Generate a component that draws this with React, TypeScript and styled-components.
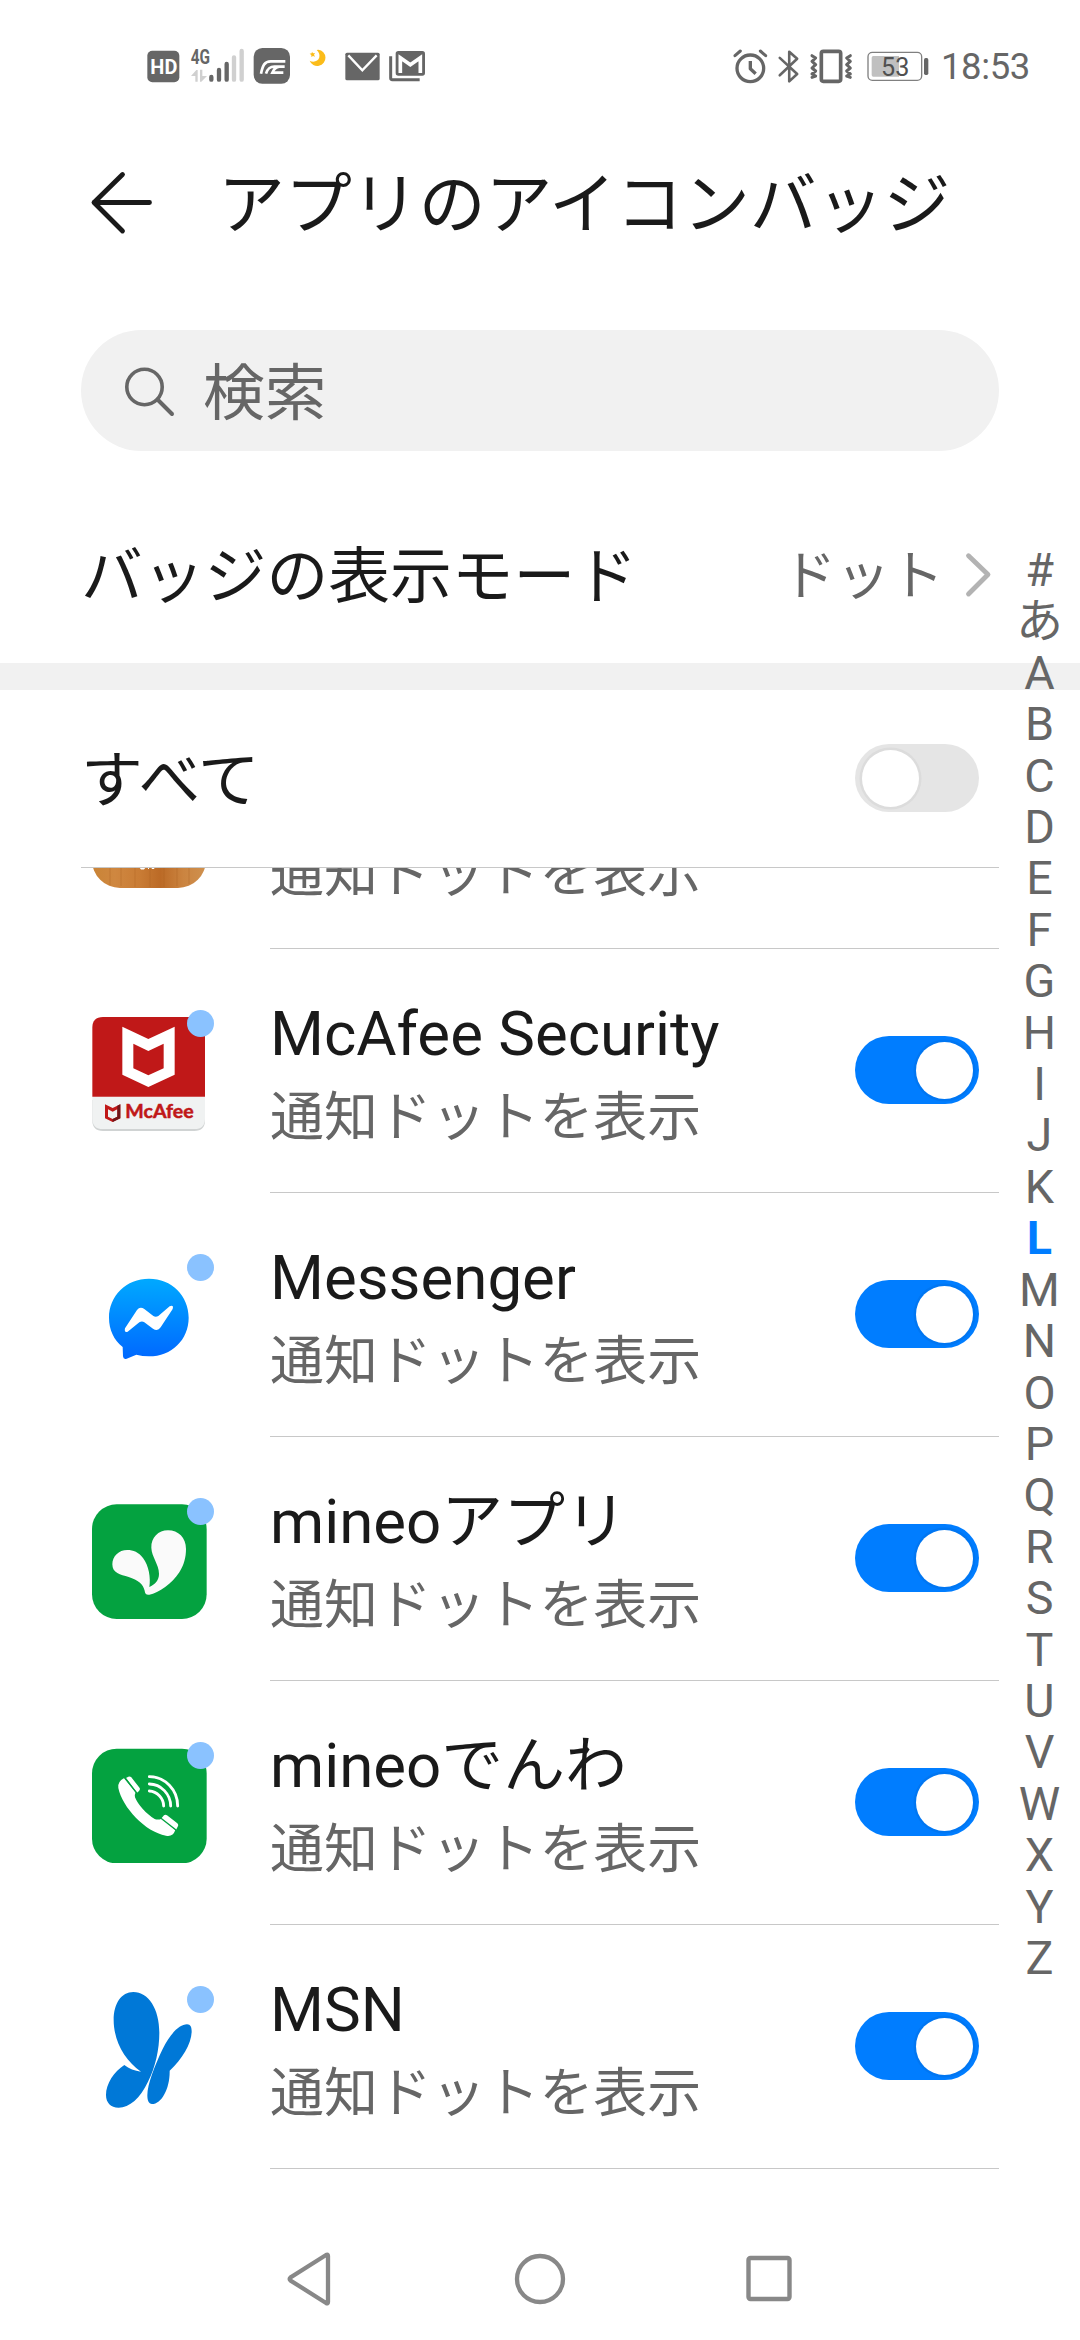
import React, { useState } from "react";
import styled, { createGlobalStyle } from "styled-components";

const GlobalStyle = createGlobalStyle`
  html, body { margin: 0; padding: 0; background: #fff; }
  * { box-sizing: border-box; }
`;

const Screen = styled.main`
  position: relative;
  display: flex;
  flex-direction: column;
  width: 1080px;
  height: 2340px;
  overflow: hidden;
  background: #fff;
  color: #1a1a1a;
  font-family: Roboto, "Noto Sans CJK JP", sans-serif;
`;

const StatusBar = styled.header`
  display: flex;
  justify-content: space-between;
  height: 134px;
  padding: 47px 51px 0 147px;
`;

const StatusGroup = styled.div`
  display: flex;
  align-items: flex-start;
  height: 40px;
`;

const StatusGlyph = styled.svg<{ $gap?: number }>`
  display: block;
  height: 40px;
  margin-left: ${(p) => p.$gap ?? 0}px;
  overflow: visible;
`;

const Clock = styled.time`
  margin-left: 11px;
  width: 88px;
  font-size: 36.5px;
  line-height: 40px;
  letter-spacing: -0.4px;
  color: #666;
  white-space: nowrap;
`;

const TitleBar = styled.div`
  display: flex;
  align-items: center;
  height: 136px;
  padding-left: 88px;
`;

const BackButton = styled.button`
  display: flex;
  padding: 0;
  border: 0;
  background: none;
`;

const Title = styled.h1`
  margin: 0 0 0 62px;
  padding-top: 6px;
  font-size: 66.9px;
  font-weight: 400;
  line-height: 90px;
  white-space: nowrap;
`;

const SearchField = styled.div`
  display: flex;
  align-items: center;
  flex: none;
  width: 918px;
  height: 121px;
  margin: 60px 0 0 81px;
  padding-left: 42px;
  border-radius: 61px;
  background: #f1f1f1;
`;

const SearchLabel = styled.span`
  margin-left: 28px;
  padding-top: 6px;
  font-size: 61.8px;
  line-height: 80px;
  color: #666;
`;

const SettingRow = styled.section<{ $height: number; $right: number; $top?: number; $bottom?: number }>`
  display: flex;
  align-items: center;
  justify-content: space-between;
  flex: none;
  height: ${(p) => p.$height}px;
  margin: 0 81px;
  padding: ${(p) => p.$top ?? 0}px ${(p) => p.$right}px ${(p) => p.$bottom ?? 0}px 0;
`;

const SettingLabel = styled.span`
  padding-top: 5px;
  font-size: 61.8px;
  line-height: 80px;
  white-space: nowrap;
`;

const ModeLink = styled.span`
  display: flex;
  align-items: center;
  gap: 20px;
`;

const ModeValue = styled.span`
  padding-top: 5px;
  font-size: 53.9px;
  line-height: 80px;
  color: #666;
`;

const Band = styled.div`
  flex: none;
  height: 27px;
  background: #f1f1f1;
`;

const ListHead = styled.div`
  flex: none;
  margin: 0 81px;
  height: 1px;
  background: #c8c8c8;
`;

const AppList = styled.ul`
  flex: none;
  height: 1301px;
  margin: 0;
  padding: 0;
  overflow: hidden;
  list-style: none;
`;

const AppRow = styled.li<{ $scrolled?: boolean }>`
  display: flex;
  height: 244px;
  margin-top: ${(p) => (p.$scrolled ? -163 : 0)}px;
  padding: 0 81px 0 92px;
`;

const IconSlot = styled.div`
  position: relative;
  flex: none;
  width: 115px;
  height: 115px;
  margin: 67px 63px 0 0;
`;

const Badge = styled.i`
  position: absolute;
  top: -6px;
  right: -7px;
  width: 27px;
  height: 27px;
  border-radius: 50%;
  background: #8ac2ff;
`;

const AppBody = styled.div`
  display: flex;
  align-items: center;
  justify-content: space-between;
  flex: 1;
  padding: 0 20px 1px 0;
  border-bottom: 1px solid #c8c8c8;
`;

const AppText = styled.div`
  display: flex;
  flex-direction: column;
  padding-top: 10px;
`;

const AppName = styled.span`
  height: 86px;
  font-size: 61.8px;
  line-height: 84px;
  white-space: nowrap;
`;

const AppState = styled.span`
  height: 80px;
  font-size: 53.9px;
  line-height: 80px;
  color: #666;
  white-space: nowrap;
`;

const Track = styled.button<{ $on: boolean }>`
  display: flex;
  align-items: center;
  justify-content: ${(p) => (p.$on ? "flex-end" : "flex-start")};
  width: 124px;
  height: 68px;
  padding: 0 6.5px;
  border: 0;
  border-radius: 34px;
  background: ${(p) => (p.$on ? "#007dff" : "#e5e5e5")};
`;

const Knob = styled.i<{ $on: boolean }>`
  width: 57px;
  height: 57px;
  border-radius: 50%;
  background: #fff;
  box-shadow: 0 0 0 2.5px ${(p) => (p.$on ? "rgba(0,0,0,.05)" : "#dcdcdc")};
`;

const IndexBar = styled.nav`
  position: absolute;
  top: 545px;
  right: 10px;
  display: flex;
  flex-direction: column;
  width: 61px;
`;

const IndexKey = styled.span<{ $active: boolean }>`
  height: 51.42px;
  font-size: 46.7px;
  line-height: 51.42px;
  font-weight: ${(p) => (p.$active ? 700 : 400)};
  text-align: center;
  color: ${(p) => (p.$active ? "#007dff" : "#666")};
`;

const NavBar = styled.footer`
  display: flex;
  align-items: flex-start;
  flex: 1;
  padding: 82px 0 0 284px;
  gap: 177px;
`;

const LeftStatus = () => (
  <StatusGroup>
    <StatusGlyph width="33" viewBox="51 51 99 120">
      <rect x="52" y="62" width="96" height="95" rx="15" fill="#666" />
      <text x="61" y="132" fontSize="62" fontWeight="700" fontFamily="Roboto, sans-serif" fill="#fff" textLength="81" lengthAdjust="spacingAndGlyphs">HD</text>
    </StatusGlyph>
    <StatusGlyph $gap={10} width="56" viewBox="180 51 168 120">
      <text x="182" y="101" fontSize="61" fontWeight="700" fontFamily="Roboto, sans-serif" fill="#666" textLength="58" lengthAdjust="spacingAndGlyphs">4G</text>
      <path d="M183 138 199 120H203V155H196V138ZM210 119H217V138H231L214 155H210Z" fill="#d0d0d0" />
      <g strokeWidth="13" strokeLinecap="round">
        <path d="M244 141V149M267 120V149M290 102V149" stroke="#666" />
        <path d="M312 82V149M335 63V149" stroke="#d0d0d0" />
      </g>
    </StatusGlyph>
    <StatusGlyph $gap={7} width="38" viewBox="369 51 114 120">
      <rect x="371" y="54" width="109" height="107" rx="26" fill="#666" />
      <path d="M393 131C398 106 404 94 422 94H466M408 131C413 116 419 110 433 110H464M460 128H427C431 119 438 111 448 110" fill="none" stroke="#fff" strokeWidth="8" />
    </StatusGlyph>
    <StatusGlyph $gap={17} width="20" viewBox="534 51 60 120">
      <path d="M565 59A24.500 24.500 0 1 1 539 92C549 98 565 95 568 82 570 72 566 66 560 60Z" fill="#fbbc1a" />
      <path d="M546 65 549 70 555 69 552 74 555 80 549 78 544 81 544 75 539 71 545 70Z" fill="#fbbc1a" />
    </StatusGlyph>
    <StatusGlyph $gap={17} width="36" viewBox="645 51 108 120">
      <rect x="646" y="68" width="103" height="83" rx="5" fill="#666" />
      <path d="M655 76 697 121 740 76" fill="none" stroke="#fff" strokeWidth="7" />
    </StatusGlyph>
    <StatusGlyph $gap={8} width="37" viewBox="777 51 111 120">
      <rect x="797" y="63" width="88" height="74" rx="8" fill="#666" />
      <path d="M811 129V83L841 104 871 83V129" fill="none" stroke="#fff" strokeWidth="11" />
      <path d="M782 79V144Q782 149 787 149H869" fill="none" stroke="#666" strokeWidth="9" />
    </StatusGlyph>
  </StatusGroup>
);

const RightStatus = () => (
  <StatusGroup>
    <StatusGlyph width="34" viewBox="36 51 102 120">
      <g fill="none" stroke="#666" strokeLinecap="round" strokeLinejoin="round">
        <circle cx="88" cy="115" r="40" strokeWidth="10" />
        <path d="M88 93V116L104 131" strokeWidth="10" strokeLinecap="butt" />
        <path d="M42 77 58 63M118 63 134 77" strokeWidth="9" />
      </g>
    </StatusGlyph>
    <StatusGlyph $gap={10} width="22" viewBox="168 51 72 120">
      <path d="M177 81 234 134 208 158V61L234 84 177 138" fill="none" stroke="#666" strokeWidth="8.500" strokeLinecap="round" strokeLinejoin="round" />
    </StatusGlyph>
    <StatusGlyph $gap={10} width="44" viewBox="270 51 132 120">
      <g fill="none" stroke="#666" strokeLinecap="round" strokeLinejoin="round">
        <rect x="307" y="64" width="58" height="90" rx="6" strokeWidth="11" />
        <path d="M279 77 290 84 279 94 290 104 279 114 290 123 279 132 290 138 279 142M394 77 383 84 394 94 383 104 394 114 383 123 394 132 383 138 394 142" strokeWidth="9" />
      </g>
    </StatusGlyph>
    <StatusGlyph $gap={14} width="63" viewBox="444 51 189 120">
      <rect x="447" y="67" width="161" height="84" rx="13" fill="none" stroke="#808080" strokeWidth="4" />
      <path d="M463 78H540V140H463Q458 140 458 135V83Q458 78 463 78Z" fill="#c0c0c0" />
      <text x="486" y="137" fontSize="80" fontFamily="Roboto, sans-serif" fill="#505050" textLength="85" lengthAdjust="spacingAndGlyphs">53</text>
      <rect x="615" y="84" width="13" height="51" rx="5" fill="#666" />
    </StatusGlyph>
    <Clock>18:53</Clock>
  </StatusGroup>
);

const WoodIcon = () => (
  <svg width="115" height="116" viewBox="0 0 115 116">
    <defs>
      <linearGradient id="wood" x1="0" x2="1">
        <stop offset="0" stopColor="#c98436" />
        <stop offset=".2" stopColor="#cf8740" />
        <stop offset=".42" stopColor="#c97c35" />
        <stop offset=".6" stopColor="#bb6a26" />
        <stop offset=".8" stopColor="#cb8440" />
        <stop offset="1" stopColor="#cf914f" />
      </linearGradient>
    </defs>
    <rect width="114" height="116" rx="28" fill="url(#wood)" />
    <path d="M18 90V113M29 96V114M43 90V115M58 96V115M72 90V115M85 96V114M97 90V112" stroke="#a95f20" strokeOpacity=".35" />
    <path d="M47 95H54L52 97.500H49ZM56 95H57V97H56ZM59 95H63L62 97H60Z" fill="#fff" />
  </svg>
);

const McAfeeIcon = () => (
  <svg width="115" height="115" viewBox="36 48 345 345">
    <path d="M37 300H375V361Q375 393 343 393H69Q37 393 37 361Z" fill="#d0d3d3" />
    <path d="M37 290H375V356Q375 387 343 387H69Q37 387 37 356Z" fill="#f0f2f2" />
    <path d="M37 290V83Q37 51 69 51H343Q375 51 375 83V290Z" fill="#c01818" />
    <path d="M127 80 205 117 284 80V224L205 261 127 224ZM160 131V205L205 226 251 205V131L205 153Z" fill="#fff" fillRule="evenodd" />
    <path d="M75 313 98 324 121 313V355L98 366 75 355ZM84 328V350L98 357 112 350V328L98 335Z" fill="#c01818" fillRule="evenodd" />
    <path d="M112 317 121 313V355L98 366V357L112 350Z" fill="#6f1518" />
    <text x="136" y="354" fontSize="54" fontWeight="700" fontFamily="Lato, sans-serif" fill="#c01818" stroke="#c01818" strokeWidth="1.500" textLength="205" lengthAdjust="spacingAndGlyphs">McAfee</text>
  </svg>
);

const MessengerIcon = () => (
  <svg width="115" height="115" viewBox="36 60 345 345">
    <defs>
      <linearGradient id="messenger" x1="0" y1="0" x2="0" y2="1">
        <stop offset="0" stopColor="#00a9ff" />
        <stop offset="1" stopColor="#0068ff" />
      </linearGradient>
    </defs>
    <path d="M207 116C275 116 326 167 326 233S275 349 207 349Q187 349 169 344L140 356Q130 359 129 349L128 321C102 300 87 269 87 233 87 167 139 116 207 116Z" fill="url(#messenger)" />
    <path d="M135 265 171 210Q180 198 193 207L220 228Q227 233 235 228L269 199Q282 194 278 207L242 262Q233 275 219 266L193 247Q186 242 178 247L143 275Q132 279 135 265Z" fill="#fff" />
  </svg>
);

const MineoIcon = () => (
  <svg width="115" height="115" viewBox="36 57 345 345">
    <rect x="36" y="58" width="344" height="344" rx="74" fill="#04a240" />
    <path d="M208 306C213 280 206 240 189 219 176 202 160 195 142 195 116 195 97 214 97 238 97 265 121 269 146 276 174 285 190 298 194 317 195 326 198 330 208 329 236 325 277 295 298 262 312 240 318 217 318 192 318 158 295 136 264 136 235 136 213 158 214 188 215 216 237 238 237 266 237 286 225 298 208 306Z" fill="#fafafa" />
  </svg>
);

const PhoneIcon = () => (
  <svg width="115" height="115" viewBox="36 54 345 345">
    <rect x="36" y="56" width="344" height="344" rx="74" fill="#04a240" />
    <path d="M132 145Q112 155 115 174C127 232 196 306 258 317Q279 321 286 300L245 266Q234 271 224 267C200 253 173 224 165 202Q163 195 167 187Z" fill="#fff" />
    <path d="M138 144 145 140Q150 138 154 142L179 174Q181 179 177 183L171 188ZM243 266 252 256Q256 253 261 256L291 279Q296 283 294 288L288 300Z" fill="#fff" />
    <path d="M136 145 170 189M243 265 289 301" stroke="#04a240" strokeWidth="4" />
    <path d="M208 183C231 184 251 205 251 228M208 162C243 162 272 193 272 228M208 140C255 140 293 180 293 228" fill="none" stroke="#fff" strokeWidth="8.500" strokeLinecap="round" />
  </svg>
);

const MsnIcon = () => (
  <svg width="115" height="115" viewBox="36 66 345 345" overflow="visible">
    <g fill="#0078d7">
      <path d="M160 66C205 66 238 116 238 188 238 238 226 292 204 335 181 384 148 413 116 413 92 413 78 398 78 375 78 341 103 304 133 285 147 296 164 303 183 305 133 271 101 211 101 150 101 101 124 66 160 66Z" />
      <path d="M321 163C332 163 335 172 335 184 335 219 307 268 269 302 270 355 245 402 216 402 206 402 202 391 202 376 202 342 225 285 248 237 270 192 298 163 321 163Z" />
    </g>
  </svg>
);

const apps = [
  { id: "wood", name: "", Icon: WoodIcon, scrolled: true },
  { id: "mcafee", name: "McAfee Security", Icon: McAfeeIcon },
  { id: "messenger", name: "Messenger", Icon: MessengerIcon },
  { id: "mineo", name: "mineoアプリ", Icon: MineoIcon },
  { id: "denwa", name: "mineoでんわ", Icon: PhoneIcon },
  { id: "msn", name: "MSN", Icon: MsnIcon },
];

const indexKeys = ["#", "あ", ..."ABCDEFGHIJKLMNOPQRSTUVWXYZ"];

function Toggle({ initial }: { initial: boolean }) {
  const [on, setOn] = useState(initial);
  return (
    <Track type="button" role="switch" aria-checked={on} $on={on} onClick={() => setOn(!on)}>
      <Knob $on={on} />
    </Track>
  );
}

export default function App() {
  return (
    <Screen lang="ja">
      <GlobalStyle />
      <StatusBar>
        <LeftStatus />
        <RightStatus />
      </StatusBar>
      <TitleBar>
        <BackButton type="button">
          <svg width="68" height="68" viewBox="0 0 68 68">
            <path d="M34.500 6 6 34 34.500 62.500M6 34H61.500" transform="translate(0 .5)" fill="none" stroke="#1a1a1a" strokeWidth="4.800" strokeLinecap="round" strokeLinejoin="round" />
          </svg>
        </BackButton>
        <Title>アプリのアイコンバッジ</Title>
      </TitleBar>
      <SearchField>
        <svg width="52" height="52" viewBox="0 0 52 52">
          <circle cx="21.500" cy="22" r="17.700" fill="none" stroke="#666" strokeWidth="3.600" />
          <path d="M34.500 34.500 49 49" stroke="#666" strokeWidth="4" strokeLinecap="round" />
        </svg>
        <SearchLabel>検索</SearchLabel>
      </SearchField>
      <SettingRow $height={212} $right={7} $top={35}>
        <SettingLabel>バッジの表示モード</SettingLabel>
        <ModeLink>
          <ModeValue>ドット</ModeValue>
          <svg width="28" height="48" viewBox="0 0 28 48">
            <path d="M4.500 4.700 24 23.500 4.500 43" fill="none" stroke="#b3b3b3" strokeWidth="4.800" strokeLinecap="round" strokeLinejoin="round" />
          </svg>
        </ModeLink>
      </SettingRow>
      <Band />
      <SettingRow $height={177} $right={20} $bottom={1}>
        <SettingLabel>すべて</SettingLabel>
        <Toggle initial={false} />
      </SettingRow>
      <ListHead />
      <AppList>
        {apps.map(({ id, name, Icon, scrolled }) => (
          <AppRow key={id} $scrolled={scrolled}>
            <IconSlot>
              <Icon />
              <Badge />
            </IconSlot>
            <AppBody>
              <AppText>
                <AppName>{name}</AppName>
                <AppState>通知ドットを表示</AppState>
              </AppText>
              <Toggle initial />
            </AppBody>
          </AppRow>
        ))}
      </AppList>
      <IndexBar>
        {indexKeys.map((key) => (
          <IndexKey key={key} $active={key === "L"}>{key}</IndexKey>
        ))}
      </IndexBar>
      <NavBar>
        <svg width="50" height="56" viewBox="0 0 50 56">
          <path d="M44 5V51Q44 53 42 52L6.500 29.500Q5 28 6.500 26.500L42 4Q44 3 44 5Z" fill="none" stroke="#888" strokeWidth="4.300" />
        </svg>
        <svg width="56" height="56" viewBox="0 0 56 56">
          <circle cx="29" cy="28" r="23" fill="none" stroke="#888" strokeWidth="4.300" />
        </svg>
        <svg width="56" height="56" viewBox="0 0 56 56">
          <rect x="4.500" y="7" width="41" height="41" rx="2" fill="none" stroke="#888" strokeWidth="4.400" />
        </svg>
      </NavBar>
    </Screen>
  );
}
